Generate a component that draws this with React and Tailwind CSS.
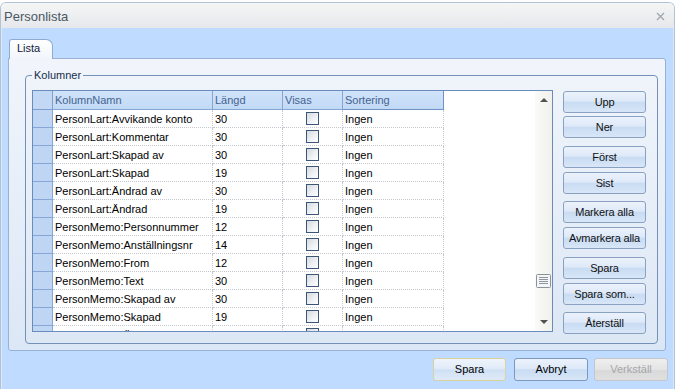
import React from "react";

const rows = [
  ["PersonLart:Avvikande konto", "30"],
  ["PersonLart:Kommentar", "30"],
  ["PersonLart:Skapad av", "30"],
  ["PersonLart:Skapad", "19"],
  ["PersonLart:Ändrad av", "30"],
  ["PersonLart:Ändrad", "19"],
  ["PersonMemo:Personnummer", "12"],
  ["PersonMemo:Anställningsnr", "14"],
  ["PersonMemo:From", "12"],
  ["PersonMemo:Text", "30"],
  ["PersonMemo:Skapad av", "30"],
  ["PersonMemo:Skapad", "19"],
  ["PersonMemo:Ändrad av", "30"],
];

function SideBtn({ children, className }) {
  return (
    <div
      className={
        "h-[22px] w-[83px] shrink-0 flex items-center justify-center rounded-[3px] border border-[#8aa2c2] bg-[linear-gradient(to_bottom,#ebf2fc_0%,#dee9f8_45%,#c9dcf3_52%,#d8e6f7_100%)] text-[11px] tracking-[-0.15px] text-[#111] " +
        (className || "")
      }
    >
      {children}
    </div>
  );
}

function Checkbox() {
  return (
    <div className="w-[13px] h-[13px] border border-[#3b5678] bg-[linear-gradient(135deg,#d6dade_0%,#eef0f2_55%,#ffffff_100%)]" />
  );
}

export default function App() {
  return (
    <div className="w-[679px] h-[389px] overflow-hidden bg-white pt-[2px] font-['Liberation_Sans',Arial,sans-serif]">
      <div className="w-[675px] h-[387px] flex flex-col border border-b-0 border-[#b3c3d6] rounded-t-[6px] overflow-hidden">
        {/* Title bar */}
        <div className="h-[25px] shrink-0 flex items-center justify-between pl-[3px] pr-[9px] bg-[linear-gradient(to_bottom,#f5f5f5,#e6e8eb)]">
          <span className="text-[13px] leading-[15px] text-[#4b5765] pt-[1px]">Personlista</span>
          <svg width="9" height="9" viewBox="0 0 9 9" className="mt-[1px]">
            <path d="M1 1 L8 8 M8 1 L1 8" stroke="#9ea6b0" strokeWidth="1.3" fill="none" />
          </svg>
        </div>

        {/* Body */}
        <div className="flex-1 flex flex-col bg-[#bfdbff] border-x border-[#d9e7f9] pl-[6px] pr-[5px] pt-[11px]">
          {/* Tab */}
          <div className="flex">
            <div className="relative z-10 -mb-px ml-[1px] h-[20px] w-[44px] border border-b-0 border-[#8eabd1] rounded-tl-[3px] rounded-tr-[7px] bg-[linear-gradient(to_bottom,#ffffff,#f1f5fb)] pl-[7px] pt-[2px] text-[11px] leading-[13px] text-[#10223a]">
              Lista
            </div>
          </div>

          {/* Panel */}
          <div className="w-[658px] h-[293px] shrink-0 border border-[#97b2d6] rounded-[3px] rounded-tl-none bg-[linear-gradient(to_bottom,#f1f5fb,#dce7f5)] pl-[16px] pt-[10px]">
            <fieldset className="w-[633px] h-[275px] min-w-0 m-0 border border-[#7590b8] rounded-[4px] px-[6px] pt-[8px]">
              <legend className="px-[2px] text-[11px] leading-[13px] text-[#142d4c]">Kolumner</legend>
              <div className="flex gap-[10px]">
                {/* Grid */}
                <div className="w-[521px] h-[242px] shrink-0 flex border border-[#6a8cbc] bg-white">
                  <div className="w-[502px] flex flex-col overflow-hidden">
                    {/* Header */}
                    <div className="flex h-[19px] shrink-0 text-[11px] text-[#45648f]">
                      <div className="w-[20px] shrink-0 bg-[#c2d8f4] border-r border-b border-[#7f9fcf]" />
                      <div className="w-[160px] shrink-0 flex items-center pl-[2px] pt-[1px] bg-[linear-gradient(to_bottom,#d0e3fa,#c2d9f6)] border-r border-b border-[#86a7d6]">KolumnNamn</div>
                      <div className="w-[70px] shrink-0 flex items-center pl-[2px] pt-[1px] bg-[linear-gradient(to_bottom,#d0e3fa,#c2d9f6)] border-r border-b border-[#86a7d6]">Längd</div>
                      <div className="w-[60px] shrink-0 flex items-center pl-[2px] pt-[1px] bg-[linear-gradient(to_bottom,#d0e3fa,#c2d9f6)] border-r border-b border-[#86a7d6]">Visas</div>
                      <div className="w-[101px] shrink-0 flex items-center pl-[2px] pt-[1px] bg-[linear-gradient(to_bottom,#d0e3fa,#c2d9f6)] border-r border-b border-[#6f92c4]">Sortering</div>
                      <div className="flex-1" />
                    </div>
                    {rows.map(([name, len], i) => (
                      <div key={i} className="flex h-[18px] shrink-0 text-[11px] text-black">
                        <div className="w-[20px] shrink-0 bg-[#bed5f3] border-r border-b border-[#86a7d6]" />
                        <div className="w-[160px] shrink-0 flex items-center pl-[2px] pt-[1px] border-r border-b border-dotted border-[#c5c9cf]">{name}</div>
                        <div className="w-[70px] shrink-0 flex items-center pl-[2px] pt-[1px] border-r border-b border-dotted border-[#c5c9cf]">{len}</div>
                        <div className="w-[60px] shrink-0 flex items-center justify-center border-r border-b border-dotted border-[#c5c9cf]">
                          <Checkbox />
                        </div>
                        <div className="w-[101px] shrink-0 flex items-center pl-[2px] pt-[1px] border-r border-b border-dotted border-[#c5c9cf]">Ingen</div>
                        <div className="flex-1" />
                      </div>
                    ))}
                  </div>
                  {/* Scrollbar */}
                  <div className="w-[17px] flex flex-col bg-[linear-gradient(to_right,#fafaf8,#f0f0ec)]">
                    <div className="h-[17px] shrink-0 flex items-center justify-center">
                      <svg width="8" height="5" viewBox="0 0 8 5">
                        <path d="M0 5 L4 1 L8 5 Z" fill="#505256" />
                      </svg>
                    </div>
                    <div className="flex-1 flex flex-col justify-end items-center pb-[26px]">
                      <svg width="15" height="14" viewBox="0 0 15 14">
                        <rect x="0.5" y="0.5" width="14" height="13" rx="1" fill="#f4f5f6" stroke="#8a929c" />
                        <path d="M3 3.5 H12 M3 5.5 H12 M3 7.5 H12 M3 9.5 H12" stroke="#8f969e" strokeWidth="1" />
                      </svg>
                    </div>
                    <div className="h-[17px] shrink-0 flex items-center justify-center">
                      <svg width="8" height="5" viewBox="0 0 8 5">
                        <path d="M0 0 L8 0 L4 4 Z" fill="#505256" />
                      </svg>
                    </div>
                  </div>
                </div>

                {/* Side buttons */}
                <div className="flex flex-col pt-[1px]">
                  <SideBtn>Upp</SideBtn>
                  <SideBtn className="mt-[3px]">Ner</SideBtn>
                  <SideBtn className="mt-[8px]">Först</SideBtn>
                  <SideBtn className="mt-[4px]">Sist</SideBtn>
                  <SideBtn className="mt-[7px]">Markera alla</SideBtn>
                  <SideBtn className="mt-[4px]">Avmarkera alla</SideBtn>
                  <SideBtn className="mt-[8px]">Spara</SideBtn>
                  <SideBtn className="mt-[4px]">Spara som...</SideBtn>
                  <SideBtn className="mt-[7px]">Återställ</SideBtn>
                </div>
              </div>
            </fieldset>
          </div>

          {/* Bottom buttons */}
          <div className="flex justify-end mt-[7px]">
            <div className="h-[23px] w-[73px] flex items-center justify-center rounded-[3px] border border-[#d9d29c] bg-[linear-gradient(to_bottom,#eef4fc_0%,#e1ebf8_45%,#cfe0f4_52%,#dfeaf8_100%)] text-[11px] text-black">
              Spara
            </div>
            <div className="ml-[8px] h-[23px] w-[74px] flex items-center justify-center rounded-[3px] border border-[#7f98ba] bg-[linear-gradient(to_bottom,#ebf2fc_0%,#dee9f8_45%,#c9dcf3_52%,#d8e6f7_100%)] text-[11px] text-black">
              Avbryt
            </div>
            <div className="ml-[6px] h-[23px] w-[74px] flex items-center justify-center rounded-[3px] border border-[#c4c6c9] bg-[linear-gradient(to_bottom,#efefef_0%,#e4e4e4_50%,#d9d9d9_52%,#e0e0e0_100%)] text-[11px] text-[#a5a7aa]">
              Verkställ
            </div>
          </div>
        </div>
      </div>
    </div>
  );
}
